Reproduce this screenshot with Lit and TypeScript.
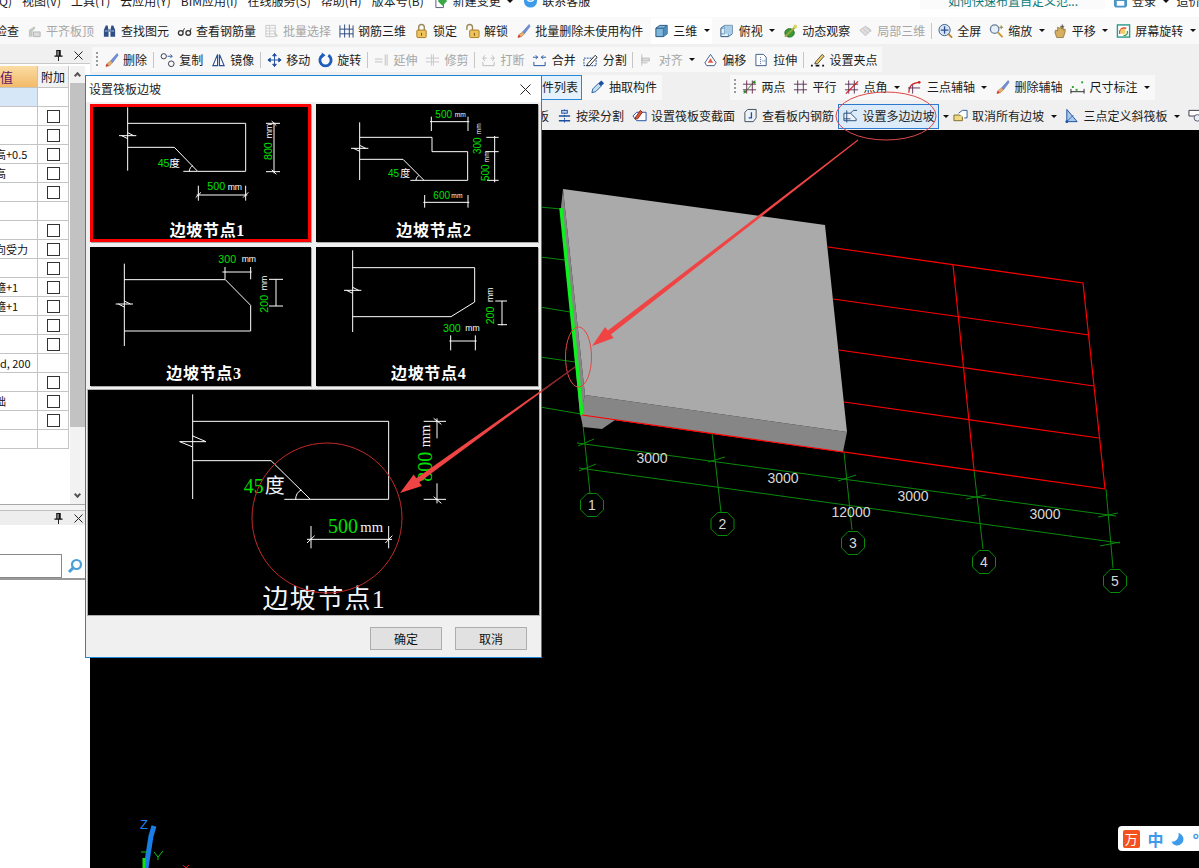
import { LitElement, html, css, svg } from "lit";
import { customElement } from "lit/decorators.js";

const FONT = `"Noto Sans CJK SC", "Liberation Sans", sans-serif`;

// 16x16 toolbar icons
const ICONS: Record<string, any> = {
    level: svg`<path d="M2 14V7l6-4 1 2-3 3v6z" fill="#c4c8c4"/><path d="M7 14V9h7v5z" fill="#d8dbd8" stroke="#b5b5b5"/>`,
    find: svg`<path d="M2 14V7l2-5h2l1 5v7zM9 14V7l1-5h2l2 5v7z" fill="#2f4f86"/><path d="M7 6h2v3H7z" fill="#6a86b4"/><path d="M3 8h3M10 8h3" stroke="#b8c8e0"/>`,
    glasses: svg`<circle cx="4" cy="10" r="2.5" fill="none" stroke="#333" stroke-width="1.4"/><circle cx="12" cy="10" r="2.5" fill="none" stroke="#333" stroke-width="1.4"/><path d="M6 9l2-4M14 9l1-4" stroke="#333"/>`,
    batch: svg`<path d="M2 2h10v12H2z" fill="none" stroke="#c6c6c6"/><path d="M2 5h10M2 8h10M2 11h10M6 2v12" stroke="#cfcfcf"/><path d="M10 8l5 5-2 1z" fill="#c6c6c6"/>`,
    rebar3d: svg`<path d="M1 2v13M15 2v13M1 6h14M1 11h14M6 1v14M11 1v14" stroke="#27457e" fill="none"/>`,
    lock: svg`<path d="M5 7V4a3 3 0 016 0v3" fill="none" stroke="#9a8a5a" stroke-width="1.5"/><rect x="3" y="7" width="10" height="8" rx="1" fill="#eec25c" stroke="#a67c20"/><path d="M8 10v3" stroke="#6b4a10"/>`,
    unlock: svg`<path d="M2 7V4a3 3 0 016 0v3" fill="none" stroke="#9a8a5a" stroke-width="1.5"/><rect x="5" y="7" width="10" height="8" rx="1" fill="#eec25c" stroke="#a67c20"/><path d="M10 10v3" stroke="#6b4a10"/>`,
    brush: svg`<path d="M14 1L7 9l2 2 6-8z" fill="#6f8fd8" stroke="#3f5fa8" stroke-width=".5"/><path d="M7 9l2 2-3 3-4 1 1-3z" fill="#e8b070" stroke="#a06a30" stroke-width=".5"/><path d="M3 12l-1 3 3-1z" fill="#d23"/>`,
    cube: svg`<path d="M2 5l4-3h8v9l-4 3H2z" fill="#7fb6dc" stroke="#24507a"/><path d="M2 5h8v9M10 5l4-3" fill="none" stroke="#24507a"/><path d="M10 5l4-3v9l-4 3z" fill="#4f8cbc"/>`,
    topview: svg`<path d="M2 5l4-3h8v9l-4 3H2z" fill="#e4f0f8" stroke="#24507a"/><path d="M2 5h8v9M10 5l4-3M6 2v9H2" fill="none" stroke="#5f8fb8"/><path d="M6 2h8v9H6z" fill="#a9cde6"/>`,
    orbit: svg`<ellipse cx="7" cy="10" rx="5" ry="4.5" fill="#3a9a3a" stroke="#1c661c"/><path d="M2 14L14 3" stroke="#9aa83a" stroke-width="2"/><circle cx="13" cy="3" r="2" fill="#d8d860"/>`,
    local3d: svg`<path d="M2 7l6-4 6 4-6 6z" fill="#dedede" stroke="#c4c4c4"/><path d="M5 5l6 6M8 3l6 6M2 7l6 6" stroke="#c4c4c4"/>`,
    fullscreen: svg`<circle cx="7" cy="7" r="6" fill="#d6e4f4" stroke="#3a5a8a"/><path d="M7 3v8M3 7h8" stroke="#2a4f8f" stroke-width="1.4"/><path d="M11 11l4 4" stroke="#b8862a" stroke-width="2"/>`,
    zoom: svg`<circle cx="6" cy="6" r="4.5" fill="#e6eef8" stroke="#6a7f9a" stroke-width="1.4"/><path d="M9.5 9.5l5 5" stroke="#c49a30" stroke-width="2"/><path d="M13 2v4M11 4h4" stroke="#7a8a3a"/>`,
    pan: svg`<path d="M3 9l2 6h7l2-6V6l-2 1V4l-2 2V3L8 5 6 4v4L4 7z" fill="#d6b060" stroke="#7a5a20" stroke-width=".7"/><path d="M11 1v4M9 3h4" stroke="#555"/>`,
    rotate: svg`<rect x="1.5" y="1.5" width="13" height="13" fill="#fff" stroke="#2a9a8a" stroke-width="1.5"/><path d="M4 11c-1-4 2-7 7-6" fill="none" stroke="#e05030" stroke-width="1.6"/><rect x="5" y="6" width="5" height="5" fill="#f0d060"/><path d="M12 8c1 3-1 5-4 5" fill="none" stroke="#40a040" stroke-width="1.4"/>`,
    copy: svg`<circle cx="4" cy="4" r="2.8" fill="none" stroke="#334"/><circle cx="12" cy="12" r="3" fill="none" stroke="#334"/><path d="M8 4h5l-2-2M13 4l-2 2" fill="none" stroke="#2a5aa8"/>`,
    mirror: svg`<path d="M7 2L2 14h5zM9 2l5 12H9z" fill="none" stroke="#2a4f8f" stroke-width="1.2"/>`,
    move: svg`<path d="M8 1v14M1 8h14M8 1L6 3.5h4zM8 15l-2-2.5h4zM1 8l2.5-2v4zM15 8l-2.5-2v4z" stroke="#1f4f9f" fill="#1f4f9f"/>`,
    spin: svg`<path d="M5 3a6 6 0 106 0" fill="none" stroke="#1d5cb8" stroke-width="3"/><path d="M4 0v6l4-3z" fill="#1d5cb8"/>`,
    extend: svg`<path d="M1 7h8M1 10h8M12 2v12M14 2v12" stroke="#c0c0c0"/>`,
    trim: svg`<path d="M1 6h14M1 10h14M7 2v12M9 2v12" stroke="#c8c8c8"/>`,
    split: svg`<path d="M2 10v4h12v-4" fill="none" stroke="#bcbcbc"/><path d="M2 6h4M10 6h4M4 3L2 6l2 3M12 3l2 3-2 3" fill="none" stroke="#bcbcbc"/>`,
    merge: svg`<path d="M2 10v4h12v-4" fill="none" stroke="#1d4f9f"/><path d="M1 5h5M10 5h5M4 3l2 2-2 2M12 3l-2 2 2 2" fill="none" stroke="#1d4f9f"/>`,
    cut: svg`<rect x="1" y="6" width="13" height="8" fill="none" stroke="#1d4f9f" stroke-dasharray="2 1"/><path d="M5 12l8-9 2 2-8 9H4z" fill="#fff" stroke="#222"/>`,
    align: svg`<path d="M3 2v12M3 6h8v3H3zM3 11h6" fill="#ddd" stroke="#bbb"/>`,
    offset: svg`<path d="M8 2l6 9-2 3H4l-2-3z" fill="#fff" stroke="#3a5a8a"/><path d="M8 6l3 5H5z" fill="#e05a4a"/>`,
    stretch: svg`<path d="M2 2h8l3 3v9H2z" fill="#fff" stroke="#3a5a8a"/><path d="M7 5v7M9 9h3" stroke="#3a5a8a" stroke-dasharray="1 1"/>`,
    grip: svg`<path d="M1 14h2M6 14h4M13 14h2" stroke="#111" stroke-width="2"/><path d="M6 10l7-8 2 2-7 8H5z" fill="#f4d060" stroke="#444"/>`,
    dropper: svg`<path d="M2 14l1-4 6-6 3 3-6 6z" fill="#bfe0f4" stroke="#2a5a9a"/><path d="M9 4l3-3 3 3-3 3z" fill="#1d4f9f"/>`,
    twopoint: svg`<path d="M1 5h14M1 11h14" stroke="#6a3050"/><path d="M2 15L14 1" stroke="#2a8a2a"/><path d="M5 1v14M11 1v14" stroke="#6a3050"/><circle cx="3" cy="13" r="1.5" fill="#2a8a2a"/><circle cx="13" cy="3" r="1.5" fill="#2a8a2a"/>`,
    parallel: svg`<path d="M1 5h14M1 11h14M5 1v14M11 1v14" stroke="#5a3058"/>`,
    angle: svg`<path d="M1 5h14M1 11h14M5 1v14M11 1v14" stroke="#5a3058"/><path d="M2 15L15 2" stroke="#d02020" stroke-width="1.3"/>`,
    arc: svg`<path d="M2 14c0-7 4-11 12-11" fill="none" stroke="#d02020" stroke-width="1.3"/><path d="M1 9h13M6 6v9" stroke="#5a3058"/><circle cx="13" cy="3" r="1.4" fill="#d02020"/>`,
    dim: svg`<path d="M1 13h14M1 10v5M15 10v5" stroke="#222"/><rect x="2" y="7" width="2" height="2" fill="#2a9a2a"/><rect x="12" y="2" width="2" height="2" fill="#2a9a2a"/><rect x="6" y="10" width="2" height="2" fill="#2a9a2a"/>`,
    beam: svg`<path d="M8 1v14" stroke="#1d4f9f" stroke-dasharray="2 1"/><rect x="5" y="2" width="6" height="3" fill="#bcd4f0" stroke="#1d4f9f"/><path d="M2 8h12M2 13h12" stroke="#1d4f9f" stroke-width="1.5"/>`,
    section: svg`<path d="M1 8l4-4h10v9H5z" fill="#fff" stroke="#1d4f9f"/><path d="M4 9l5-7 2 2-5 7H3z" fill="#e05a3a" stroke="#902010"/>`,
    inner: svg`<path d="M2 4l3-3h9v9l-3 4H2z" fill="#eef2f6" stroke="#3a4a5a"/><path d="M9 4v6H6" fill="none" stroke="#1d4f9f" stroke-width="1.4"/>`,
    polyslope: svg`<path d="M1 5h7l6 6v2H1z" fill="#eef4fa" stroke="#234a7a"/><path d="M4 2v13M1 11h7M8 5l3-3h4" fill="none" stroke="#234a7a"/>`,
    cancel: svg`<path d="M1 7h9v6H1z" fill="#f2d880" stroke="#7a6a2a"/><path d="M6 5l4-3h5v8h-3" fill="#fff" stroke="#2a5a9a"/>`,
    threept: svg`<path d="M3 1v13h11z" fill="#a8c8ec" stroke="#1d4f9f"/><path d="M3 14L10 7" stroke="#2a6ac0"/><circle cx="3" cy="14" r="1.5" fill="#1d4f9f"/>`,
    view: svg`<path d="M1 2h13v6H1z" fill="#fff" stroke="#334"/><circle cx="10" cy="10" r="3.5" fill="#e6eef8" stroke="#556"/><path d="M12.5 12.5L15 15" stroke="#a08030" stroke-width="2"/>`,
    change: svg`<path d="M2 1h8v14H2z" fill="#fff" stroke="#557"/><path d="M9 3l5 5-5 5-5-5z" fill="#39a845"/>`,
    service: svg`<circle cx="8" cy="8" r="7" fill="#3d9be9"/><path d="M4 6c2 3 6 3 8 0" fill="none" stroke="#fff" stroke-width="1.4"/>`,
    login: svg`<rect x="1" y="1" width="14" height="14" rx="3" fill="#4a94c8"/><path d="M4 8h8v5H4z" fill="#fff"/><circle cx="8" cy="5" r="2" fill="#fff"/>`,
};

const icon = (name: string) => html`<svg class="ic" viewBox="0 0 16 16">${ICONS[name]}</svg>`;

type Item = { i?: string; t?: string; off?: boolean; caret?: boolean; sep?: boolean; grip?: boolean; pick?: boolean; drop?: boolean };

const renderItems = (items: Item[]) =>
    items.map((it) => {
        if (it.sep) return html`<span class="sep"></span>`;
        if (it.grip) return html`<span class="grip"></span>`;
        if (it.drop) return html`<span class="caret drop"></span>`;
        return html`<span class="item ${it.off ? "off" : ""} ${it.pick ? "pick" : ""}">
            ${it.i ? icon(it.i) : ""}${it.t ? html`<span>${it.t}</span>` : ""}
            ${it.caret ? html`<span class="caret"></span>` : ""}
        </span>`;
    });

const toolbarStyles = css`
    .item {
        display: inline-flex;
        align-items: center;
        flex: none;
        white-space: nowrap;
        color: #1c1c1c;
        font: 12px/16px ${css([FONT] as any)};
    }
    .item.off {
        color: #a6a6a6;
    }
    .ic {
        width: 15px;
        height: 16px;
        margin-right: 4.5px;
        flex: none;
    }
    .caret {
        width: 0;
        height: 0;
        margin-left: 6.5px;
        border: 3px solid transparent;
        border-top: 3px solid #111;
        border-bottom: 0;
    }
    .caret.drop {
        flex: none;
        margin: 0 -3.5px;
    }
    .sep {
        width: 1px;
        height: 16px;
        margin: 0 -1.7px;
        background: #c6c6c6;
        flex: none;
    }
    .grip {
        width: 2px;
        height: 16px;
        margin-right: -2px;
        flex: none;
        background: repeating-linear-gradient(#9a9a9a 0 2px, transparent 2px 4px);
    }
`;

const ROW1: Item[] = [
    { t: "检查" },
    { i: "level", t: "平齐板顶", off: true },
    { i: "find", t: "查找图元" },
    { i: "glasses", t: "查看钢筋量" },
    { i: "batch", t: "批量选择", off: true },
    { i: "rebar3d", t: "钢筋三维" },
    { i: "lock", t: "锁定" },
    { i: "unlock", t: "解锁" },
    { i: "brush", t: "批量删除未使用构件" },
];
const ROW1B: Item[] = [{ i: "cube", t: "三维", caret: true }];
const ROW1C: Item[] = [
    { i: "topview", t: "俯视", caret: true },
    { i: "orbit", t: "动态观察" },
    { i: "local3d", t: "局部三维", off: true },
    { sep: true },
    { i: "fullscreen", t: "全屏" },
    { i: "zoom", t: "缩放", caret: true },
    { i: "pan", t: "平移", caret: true },
    { i: "rotate", t: "屏幕旋转", caret: true },
    { sep: true },
];
const ROW2: Item[] = [
    { grip: true },
    { i: "brush", t: "删除" },
    { sep: true },
    { i: "copy", t: "复制" },
    { i: "mirror", t: "镜像" },
    { sep: true },
    { i: "move", t: "移动" },
    { i: "spin", t: "旋转" },
    { sep: true },
    { i: "extend", t: "延伸", off: true },
    { i: "trim", t: "修剪", off: true },
    { sep: true },
    { i: "split", t: "打断", off: true },
    { i: "merge", t: "合并" },
    { i: "cut", t: "分割" },
    { sep: true },
    { i: "align", t: "对齐", off: true, caret: true },
    { i: "offset", t: "偏移" },
    { i: "stretch", t: "拉伸" },
    { sep: true },
    { i: "grip", t: "设置夹点" },
];
const ROW3B: Item[] = [
    { grip: true },
    { i: "twopoint", t: "两点" },
    { i: "parallel", t: "平行" },
    { i: "angle", t: "点角", caret: true },
    { i: "arc", t: "三点辅轴", caret: true },
    { i: "brush", t: "删除辅轴" },
    { i: "dim", t: "尺寸标注", caret: true },
];
const ROW4: Item[] = [
    { t: "筏板" },
    { i: "beam", t: "按梁分割" },
    { i: "section", t: "设置筏板变截面" },
    { i: "inner", t: "查看板内钢筋" },
    { i: "polyslope", t: "设置多边边坡", pick: true },
    { drop: true },
    { i: "cancel", t: "取消所有边坡", caret: true },
    { i: "threept", t: "三点定义斜筏板", caret: true },
    { i: "view" },
];

const CHECKS = [0, 1, 1, 1, 1, 1, 0, 1, 1, 1, 1, 1, 1, 1, 0, 1, 1, 1, 0];
const VALUES: Record<number, string> = {
    3: "高+0.5",
    4: "高",
    8: "向受力",
    10: "箍+1",
    11: "箍+1",
    14: "\u00a0\u00a0d, 200",
    16: "础",
};

const pin = svg`<path d="M2.5 0h5v6h2v1.5h-4V12h-1V7.5h-4V6h2z" fill="#111"/><path d="M4 1v5h1V1z" fill="#eee"/>`;
const cross = svg`<path d="M.5.5l8 8M8.5.5l-8 8" stroke="#222" fill="none"/>`;

@customElement("side-panel")
class SidePanel extends LitElement {
    render() {
        return html`
            <div class="head">
                <svg class="pin" viewBox="0 0 10 12">${pin}</svg>
                <svg class="x" viewBox="0 0 9 9">${cross}</svg>
            </div>
            <div class="body">
                <div class="table">
                    <div class="th val"><span>值</span></div>
                    <div class="th add">附加</div>
                    ${CHECKS.map(
                        (c, i) => html`
                            <div class="td ${i === 0 ? "first" : ""}"><span class="value">${VALUES[i] ?? ""}</span></div>
                            <div class="td box">${c ? html`<span class="check"></span>` : ""}</div>
                        `
                    )}
                </div>
                <div class="scroll">
                    <div class="thumb"><span class="chev up"></span></div>
                    <span class="chev down"></span>
                </div>
            </div>
            <div class="rule"></div>
            <div class="head second">
                <svg class="pin" viewBox="0 0 10 12">${pin}</svg>
                <svg class="x" viewBox="0 0 9 9">${cross}</svg>
            </div>
            <div class="search">
                <div class="input"></div>
                <svg class="glass" viewBox="0 0 16 16">
                    <circle cx="9.5" cy="6.5" r="4.5" fill="none" stroke="#4a9fd8" stroke-width="2.2" />
                    <path d="M6 10l-4 4" stroke="#4a9fd8" stroke-width="3" />
                </svg>
            </div>
        `;
    }

    static styles = css`
        :host {
            display: flex;
            flex-direction: column;
            width: 90px;
            flex: none;
            background: #fff;
            font: 12px/16px ${css([FONT] as any)};
            color: #111;
        }
        .head {
            height: 16px;
            margin-bottom: 2px;
            background: #f0f0f0;
            border-bottom: 1px solid #c8c8c8;
            display: flex;
            justify-content: flex-end;
            align-items: center;
            gap: 11px;
            padding-right: 7px;
        }
        .head.second {
            height: 14px;
            margin: 0;
            background: #eee;
            border: 0;
        }
        .pin {
            width: 9px;
            height: 11px;
        }
        .x {
            width: 9px;
            height: 9px;
        }
        .body {
            display: flex;
            height: 438px;
        }
        .table {
            width: 69px;
            flex: none;
            display: grid;
            grid-template-columns: 38px 31px;
            grid-auto-rows: 19px;
            grid-template-rows: 22px;
            overflow: hidden;
        }
        .th {
            display: flex;
            align-items: center;
            border-right: 1px solid #c4c4c4;
            border-bottom: 1px solid #c4c4c4;
        }
        .val {
            background: linear-gradient(#fbdca4, #f2ba68);
            color: #60106a;
            font-size: 13px;
        }
        .add {
            background: #f2f2f2;
            justify-content: center;
        }
        .td {
            border-right: 1px solid #c4c4c4;
            border-bottom: 1px solid #c4c4c4;
            display: flex;
            align-items: center;
            overflow: hidden;
            white-space: nowrap;
        }
        .first {
            background: #d6e8f8;
        }
        .value {
            margin-left: -5px;
            font-size: 11px;
        }
        .box {
            justify-content: center;
        }
        .check {
            width: 13px;
            height: 13px;
            box-sizing: border-box;
            border: 1px solid #333;
            background: #fff;
        }
        .scroll {
            width: 15px;
            margin-left: 1px;
            background: #f2f2f2;
            display: flex;
            flex-direction: column;
            align-items: center;
            justify-content: space-between;
            padding-bottom: 7px;
            box-sizing: border-box;
        }
        .thumb {
            width: 15px;
            height: 361px;
            background: linear-gradient(#f2f2f2 0 17px, #c2c2c2 17px);
            display: flex;
            justify-content: center;
            padding-top: 7px;
            box-sizing: border-box;
        }
        .chev {
            width: 5px;
            height: 5px;
            border-left: 2px solid #555;
            border-top: 2px solid #555;
            transform: rotate(45deg);
            box-sizing: border-box;
        }
        .chev.down {
            transform: rotate(225deg);
        }
        .rule {
            height: 7px;
            border-top: 1px solid #a8a8a8;
            border-bottom: 1px solid #c0c0c0;
            background: #f4f4f4;
            box-sizing: border-box;
        }
        .search {
            margin-top: 29px;
            display: flex;
            align-items: center;
            border-bottom: 2px solid #999;
        }
        .input {
            width: 62px;
            height: 24px;
            box-sizing: border-box;
            border: 1px solid #888;
            border-left: 0;
            background: #fff;
        }
        .glass {
            width: 16px;
            height: 16px;
            margin-left: 5px;
        }
    `;
}

// drawings are written in 3x units, so a stroke of 3 is one screen pixel
const t = (x: number, y: number, s: string, c: string) => svg`<text x=${x} y=${y} class=${c}>${s}</text>`;
const v = (x: number, y: number, s: string, c: string) =>
    svg`<text transform="translate(${x} ${y}) rotate(-90)" class=${c}>${s}</text>`;
const ln = (d: string) => svg`<path d=${d} class="ln" />`;
const mark = (x: number, y: number, w = 26) =>
    ln(`M${x - w} ${y}H${x + w}M${x} ${y - 9}L${x + w * 0.7} ${y}M${x - w * 0.7} ${y}L${x} ${y + 9}`);

const node1 = svg`
    ${ln("M128 97V287M128 145H482V289H338L268 217H128M295 289H338M313 289C313 281 318 274 324 272")}
    ${mark(128, 182)}
    ${t(218, 277, "45", "g s")}${t(253, 277, "度", "w s")}
    ${t(367, 345, "500", "g s")}${t(428, 346, "mm", "w m")}
    ${ln("M340 332V377M482 332V377M335 360H487M332 368L348 352M474 368L490 352")}
    ${ln("M567 143V295M543 145H585M543 290H585M560 138L574 152M560 284L574 298")}
    ${v(562, 255, "800", "g s")}${v(560, 190, "mm", "w m")}
    ${t(367, 482, "边坡节点1", "lb")}`;

const node2 = svg`
    ${ln("M823 142V315M823 187H1040V230H1147V316H1016L953 253H823M975 316H1016M992 316C992 310 996 304 1000 302")}
    ${mark(823, 220)}
    ${t(908, 305, "45", "g s2")}${t(945, 305, "度", "w s2")}
    ${t(1050, 128, "500", "g s2")}${t(1108, 125, "mm", "w m2")}
    ${t(1044, 372, "600", "g s2")}${t(1098, 369, "mm", "w m2")}
    ${ln("M1038 125V168M1148 125V168M1034 140H1152M1018 360V398M1148 360V398M1014 382H1152")}
    ${ln("M1228 183V322M1203 187H1240M1200 230H1240M1205 316H1240")}
    ${v(1187, 237, "300", "g s2")}${v(1186, 178, "mm", "w m2")}
    ${v(1212, 318, "500", "g s2")}${v(1211, 262, "mm", "w m2")}
    ${t(1046, 482, "边坡节点2", "lb")}`;

const node3 = svg`
    ${ln("M118 565V812M118 613H421L497 690V767H118")}
    ${mark(118, 686)}
    ${t(400, 563, "300", "g s")}${t(470, 560, "mm", "w m")}
    ${ln("M420 575V612M497 575V612M412 590H500")}
    ${ln("M573 612V692M552 612H594M552 692H594")}
    ${v(548, 712, "200", "g s")}${v(545, 645, "mm", "w m")}
    ${t(357, 910, "边坡节点3", "lb")}`;

const node4 = svg`
    ${ln("M802 525V770M802 577H1168V680L1097 724H802")}
    ${mark(802, 645)}
    ${t(1073, 770, "300", "g s")}${t(1140, 768, "mm", "w m")}
    ${ln("M1096 780V825M1170 780V825M1092 797H1174")}
    ${ln("M1250 677V750M1230 677H1265M1237 748H1265")}
    ${v(1225, 747, "200", "g s")}${v(1222, 680, "mm", "w m")}
    ${t(1030, 910, "边坡节点4", "lb")}`;

const bigNode = svg`
    ${ln("M322 28V342M322 109H910V343H675L557 227H322M597 343H675M631 343C631 330 637 320 648 315")}
    ${ln("M283 170H362M320 152L362 170M283 170L320 185")}
    ${t(475, 325, "45", "g big")}${t(538, 325, "度", "wh big")}
    ${t(728, 443, "500", "g big")}${t(825, 440, "mm", "wh bm")}
    ${ln("M677 423V490M910 423V490M665 463H920M665 474L688 452M900 474L921 452")}
    ${ln("M1055 100V160M1055 295V355M1015 109H1082M1015 343H1082M1045 100L1068 118M1045 335L1068 355")}
    ${v(1040, 290, "800", "g big")}${v(1035, 187, "mm", "wh bm")}
    ${t(717, 668, "边坡节点1", "lbig")}`;

@customElement("slope-dialog")
class SlopeDialog extends LitElement {
    render() {
        return html`
            <div class="title">
                <span>设置筏板边坡</span>
                <svg class="close" viewBox="0 0 11 11"><path d="M.5.5l10 10M10.5.5l-10 10" stroke="#222" /></svg>
            </div>
            <div class="cells">
                <div class="cell on"><svg viewBox="15 87 663 414">${node1}</svg></div>
                <div class="cell"><svg viewBox="692 87 666 414">${node2}</svg></div>
                <div class="cell"><svg viewBox="15 515 663 417">${node3}</svg></div>
                <div class="cell"><svg viewBox="692 515 666 417">${node4}</svg></div>
            </div>
            <div class="large"><svg viewBox="8 15 1353 675">${bigNode}</svg></div>
            <div class="foot">
                <button>确定</button>
                <button>取消</button>
            </div>
        `;
    }

    static styles = css`
        :host {
            position: absolute;
            left: 85px;
            top: 75px;
            width: 457px;
            height: 583px;
            box-sizing: border-box;
            display: flex;
            flex-direction: column;
            background: #f0f0f0;
            border: 1px solid #1a86d8;
            font: 12px/16px ${css([FONT] as any)};
            color: #222;
        }
        .title {
            height: 26px;
            flex: none;
            background: #fff;
            display: flex;
            align-items: center;
            justify-content: space-between;
            padding: 0 10px 0 3px;
        }
        .close {
            width: 11px;
            height: 11px;
        }
        .cells {
            display: grid;
            grid-template-columns: 221px 222px;
            grid-template-rows: 138px 139px;
            gap: 5px;
            margin: 2px 0 0 4px;
        }
        .cell {
            background: #000;
            line-height: 0;
            position: relative;
            box-shadow: 1px 1px 0 #a8a8a8;
        }
        .cell svg,
        .large svg {
            width: 100%;
            height: 100%;
            display: block;
        }
        .cell.on {
            outline: 3px solid #f00;
            outline-offset: -3px;
        }
        .large {
            width: 451px;
            height: 225px;
            margin: 4px 0 0 2px;
            background: #000;
            box-shadow: 0 0 0 1px #b0b0b0;
            flex: none;
        }
        .foot {
            display: flex;
            justify-content: flex-end;
            gap: 13px;
            padding: 12px 14px 0 0;
        }
        button {
            width: 72px;
            height: 23px;
            padding: 0;
            background: #e1e1e1;
            border: 1px solid #adadad;
            border-radius: 0;
            color: #111;
            font: 12px/16px ${css([FONT] as any)};
        }
        .ln {
            fill: none;
            stroke: #fff;
            stroke-width: 3;
        }
        text {
            font-family: "Liberation Sans", "Noto Sans CJK SC", sans-serif;
        }
        .g {
            fill: #00e000;
        }
        .w {
            fill: #fff;
        }
        .wh {
            fill: #eef4f8;
        }
        .s {
            font-size: 32px;
        }
        .s2 {
            font-size: 30px;
        }
        .m {
            font-size: 26px;
        }
        .m2 {
            font-size: 20px;
        }
        .big {
            font-family: "Liberation Serif", "Noto Sans CJK SC", serif;
            font-size: 60px;
        }
        .bm {
            font-family: "Liberation Serif", serif;
            font-size: 44px;
        }
        .lb {
            fill: #fff;
            font-family: "Liberation Serif", "Noto Sans CJK SC", serif;
            font-size: 48px;
            font-weight: 700;
            letter-spacing: 2px;
            text-anchor: middle;
        }
        .lbig {
            fill: #f2f6fa;
            font-family: "Liberation Serif", "Noto Sans CJK SC", serif;
            font-size: 78px;
            letter-spacing: 4px;
            text-anchor: middle;
        }
    `;
}

const hoops = [
    [592, 505, "1"],
    [722.5, 524, "2"],
    [853, 543, "3"],
    [984, 562, "4"],
    [1115, 581, "5"],
] as const;

const ring = (cx: number, cy: number) => {
    const pts: string[] = [];
    for (let a = 0; a < 8; a++) {
        const r = ((a + 0.5) * Math.PI) / 4;
        pts.push(`${(cx + 12.5 * Math.cos(r)).toFixed(1)},${(cy + 12.5 * Math.sin(r)).toFixed(1)}`);
    }
    return pts.join(" ");
};

@customElement("model-view")
class ModelView extends LitElement {
    render() {
        return html`<svg viewBox="90 130 1109 738">
            <g class="green">
                <path d="M540 207L561 209M540 257L565 260M540 307L570 312M540 357L575 362M540 407L581 414" />
                <path d="M577 443L1116 516M579 468L1120 543" />
                <path d="M583 425L590 493M712 433L721 512M844 452L852 530M974 470L983 549M1106 489L1113 568" />
                <path d="M578 446L594 439M708 462L725 457M838 481L856 475M966 499L986 495M1098 517L1118 513" />
                <path d="M579 471L596 464M1100 546L1120 542" />
                ${hoops.map(([x, y]) => svg`<polygon points=${ring(x, y)} />`)}
            </g>
            <g class="red">
                <path d="M828 247L1083 283L1105 489M833 299L1089 335M839 350L1094 386M844 402L1099 438" />
                <path d="M582 415L1105 489M953 265L974 470" />
            </g>
            <polygon class="slab-dark" points="563,189 561,207 580,415 585,395" />
            <polygon class="slab-dark" points="585,395 847,432 843,452 615,420 602,429 583,427 580,413" />
            <polygon class="slab-top" points="563,189 825,225 847,432 585,395" />
            <path class="edge" d="M561 208L582 415" />
            <path class="red" d="M582 415L843 452" />
            <g class="dim">
                ${[
                    [652, 463, "3000"],
                    [783, 483, "3000"],
                    [913, 501, "3000"],
                    [1045, 519, "3000"],
                    [851, 517, "12000"],
                ].map(([x, y, s]) => svg`<text x=${x} y=${y}>${s}</text>`)}
                ${hoops.map(([x, y, s]) => svg`<text x=${x} y=${y + 5}>${s}</text>`)}
            </g>
            <text class="axis-z" x="140" y="829">Z</text>
            <path class="axis-blue" d="M154 826L151 836L146 868" />
            <path class="axis-green" d="M144 858V868" />
            <path class="axis-y" d="M154 852L158 857L163 851M158 857V860M141 852H147" />
            <path class="axis-x" d="M183 865L186 868L189 865" />
        </svg>`;
    }

    static styles = css`
        :host {
            display: block;
            flex: 1;
            min-height: 0;
            background: #000;
        }
        svg {
            display: block;
            width: 1109px;
            height: 738px;
        }
        .green path,
        .green polygon {
            fill: none;
            stroke: #0a8a0a;
            stroke-width: 1;
        }
        .red path,
        path.red {
            fill: none;
            stroke: #f00;
            stroke-width: 1.2;
        }
        .slab-top {
            fill: #aaa;
        }
        .slab-dark {
            fill: #868686;
        }
        .edge {
            stroke: #10f020;
            stroke-width: 3.5;
            fill: none;
        }
        .dim text {
            fill: #d8d8d8;
            font: 14px "Liberation Sans", sans-serif;
            text-anchor: middle;
        }
        .axis-z {
            fill: #1a86f0;
            font: 13px "Liberation Sans", sans-serif;
        }
        .axis-blue {
            stroke: #1a7ee8;
            stroke-width: 5;
            fill: none;
        }
        .axis-green {
            stroke: #10e010;
            stroke-width: 3;
        }
        .axis-y {
            stroke: #10c810;
            fill: none;
        }
        .axis-x {
            stroke: #e01010;
            fill: none;
        }
    `;
}

@customElement("app-root")
class AppRoot extends LitElement {
    render() {
        return html`
            <div class="menu">
                <span class="q">Q)</span><span>视图(V)</span><span>工具(T)</span><span>云应用(Y)</span><span>BIM应用(I)</span>
                <span>在线服务(S)</span><span>帮助(H)</span><span>版本号(B)</span>
                ${renderItems([{ i: "change", t: "新建变更", caret: true }, { i: "service", t: "联系客服" }])}
                <div class="menu-right">
                    <div class="tip">如何快速布置自定义范...</div>
                    ${renderItems([{ i: "login", t: "登录", caret: true }])}
                    <span>造价</span>
                </div>
            </div>
            <div class="row one">
                ${renderItems(ROW1)}
                <div class="panel">${renderItems(ROW1B)}</div>
                ${renderItems(ROW1C)}
            </div>
            <div class="work">
                <side-panel></side-panel>
                <div class="main">
                    <div class="row two"><div class="strip">${renderItems(ROW2)}</div></div>
                    <div class="row three">
                        <div class="strip left">
                            <span class="item pick list">构件列表</span>
                            ${renderItems([{ i: "dropper", t: "抽取构件" }])}
                        </div>
                        <div class="strip right">${renderItems(ROW3B)}</div>
                    </div>
                    <div class="row four">${renderItems(ROW4)}</div>
                    <model-view></model-view>
                </div>
            </div>
            <slope-dialog></slope-dialog>
            <svg class="notes" viewBox="0 0 1199 868">
                <ellipse cx="886" cy="116" rx="50" ry="24" />
                <ellipse cx="578.5" cy="357" rx="13" ry="30" />
                <circle cx="327" cy="518" r="75" class="deep" />
                <polygon points="857.7,139.6 858.3,140.4 610.9,334.6 613.7,338.1 592,346 605.1,327.1 607.9,330.6" />
                <polygon points="574.8,366.7 575.2,367.3 419.3,482.2 421.9,485.9 400,493 413.7,474.5 416.3,478.2" />
                <path class="dark" d="M575 367L542 391" />
            </svg>
            <div class="ime">
                <span class="ime-logo">万</span>
                <span class="ime-zh">中</span>
                <svg class="ime-moon" viewBox="0 0 14 14"><path d="M8 0.5A6.8 6.8 0 1 1 0.5 10A7.5 7.5 0 0 0 8 0.5z" fill="#3d9be9" /></svg>
                <span class="ime-dot">°</span>
            </div>
        `;
    }

    static styles = [
        toolbarStyles,
        css`
            :host {
                display: block;
                position: relative;
                width: 1199px;
                height: 868px;
                overflow: hidden;
                background: #f0f0f0;
                font: 12px/16px ${css([FONT] as any)};
                color: #1c1c1c;
            }
            .menu {
                height: 17px;
                overflow: hidden;
                background: #fff;
                display: flex;
                align-items: flex-start;
                gap: 10px;
                white-space: nowrap;
            }
            .menu > * {
                margin-top: -7px;
            }
            .menu .q {
                margin-left: -1px;
            }
            .menu .ic {
                margin-right: 4px;
            }
            .menu-right {
                margin-left: auto;
                width: 279px;
                flex: none;
                display: flex;
                align-items: center;
                gap: 8px;
                overflow: hidden;
            }
            .tip {
                width: 185px;
                padding-left: 28px;
                box-sizing: border-box;
                color: #0b7a78;
                background: #fbfbfb;
                flex: none;
            }
            .row {
                display: flex;
                align-items: center;
                gap: 7.5px;
                box-sizing: border-box;
            }
            .one {
                height: 30px;
                margin-left: -5px;
                padding-bottom: 3px;
                background: linear-gradient(#f9f9f9 27px, #f0f0f0 27px);
                white-space: nowrap;
                overflow: hidden;
            }
            .panel {
                background: #fff;
                width: 61px;
                height: 26px;
                display: flex;
                align-items: center;
                padding-left: 3px;
                box-sizing: border-box;
                flex: none;
            }
            .work {
                display: flex;
                height: 821px;
            }
            .main {
                flex: 1;
                min-width: 0;
                display: flex;
                flex-direction: column;
            }
            .two {
                height: 27px;
                padding-left: 2px;
                padding-bottom: 2px;
            }
            .strip {
                display: flex;
                align-items: center;
                gap: 7.5px;
                height: 25px;
                background: #f8f8f8;
                padding: 0 5px 0 4px;
                box-sizing: border-box;
            }
            .three {
                height: 28px;
                padding-bottom: 2px;
            }
            .three .left {
                margin-left: 436px;
                padding: 0 5px 0 0;
            }
            .three .right {
                margin-left: auto;
                margin-right: 44px;
            }
            .list {
                height: 23px;
                padding: 0 3px;
                background: #e5f1fb;
                border: 1px solid #2b87d8;
            }
            .four {
                height: 28px;
                padding-left: 435px;
                white-space: nowrap;
                overflow: hidden;
            }
            .four .pick {
                height: 23px;
                margin-left: -3.5px;
                padding: 0 3px 0 4px;
                background: #dcebf9;
                border: 1px solid #2b7ad0;
            }
            .notes {
                position: absolute;
                left: 0;
                top: 0;
                width: 1199px;
                height: 868px;
                pointer-events: none;
            }
            .notes ellipse,
            .notes circle {
                fill: none;
                stroke: #e04848;
                stroke-width: 1;
            }
            .notes .deep {
                stroke: #c42a2a;
            }
            .notes .dark {
                stroke: #7a2424;
                stroke-width: 1.2;
            }
            .notes polygon {
                fill: #f04444;
            }
            .ime {
                position: absolute;
                right: 0;
                top: 826px;
                width: 81px;
                height: 25px;
                background: #fff;
                border-radius: 4px 0 0 4px;
                display: flex;
                align-items: center;
                padding-left: 5px;
                box-sizing: border-box;
            }
            .ime-logo {
                width: 18px;
                height: 18px;
                background: #f4511e;
                border-radius: 2px;
                color: #fff;
                font-size: 13px;
                line-height: 18px;
                text-align: center;
            }
            .ime-zh {
                margin-left: 8px;
                color: #3d9be9;
                font-size: 16px;
                font-weight: 700;
            }
            .ime-moon {
                width: 14px;
                height: 14px;
                margin-left: 7px;
            }
            .ime-dot {
                margin-left: 9px;
                color: #3d9be9;
                font-size: 16px;
                font-weight: 700;
            }
        `,
    ];
}
